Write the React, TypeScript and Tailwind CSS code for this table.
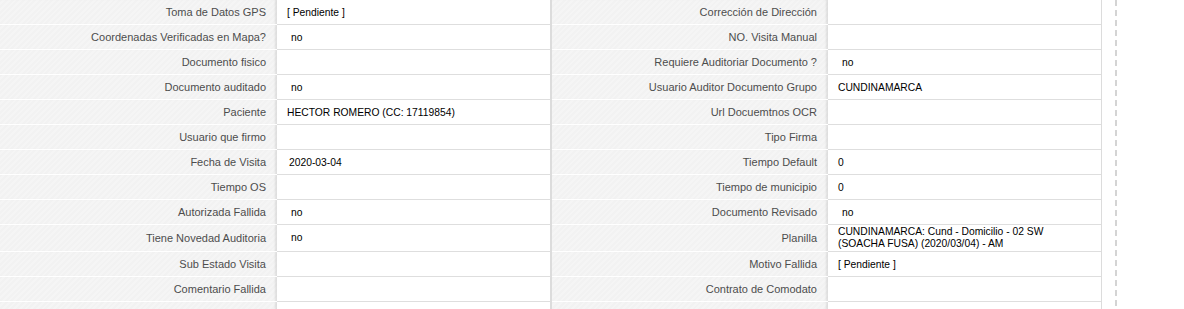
import React from "react";

type Row = {
  label: string;
  value?: React.ReactNode;
  pad?: string;
  tall?: boolean;
};

const left: Row[] = [
  { label: "Toma de Datos GPS", value: "[ Pendiente ]" },
  { label: "Coordenadas Verificadas en Mapa?", value: "no", pad: "pl-[14px]" },
  { label: "Documento fisico" },
  { label: "Documento auditado", value: "no", pad: "pl-[14px]" },
  { label: "Paciente", value: "HECTOR ROMERO (CC: 17119854)" },
  { label: "Usuario que firmo" },
  { label: "Fecha de Visita", value: "2020-03-04", pad: "pl-[12px]" },
  { label: "Tiempo OS" },
  { label: "Autorizada Fallida", value: "no", pad: "pl-[14px]" },
  { label: "Tiene Novedad Auditoria", value: "no", pad: "pl-[14px]", tall: true },
  { label: "Sub Estado Visita" },
  { label: "Comentario Fallida" },
  { label: "" },
];

const right: Row[] = [
  { label: "Corrección de Dirección" },
  { label: "NO. Visita Manual" },
  { label: "Requiere Auditoriar Documento ?", value: "no", pad: "pl-[14px]" },
  { label: "Usuario Auditor Documento Grupo", value: "CUNDINAMARCA" },
  { label: "Url Docuemtnos OCR" },
  { label: "Tipo Firma" },
  { label: "Tiempo Default", value: "0" },
  { label: "Tiempo de municipio", value: "0" },
  { label: "Documento Revisado", value: "no", pad: "pl-[14px]" },
  {
    label: "Planilla",
    value: (
      <>
        CUNDINAMARCA: Cund - Domicilio - 02 SW
        <br />
        (SOACHA FUSA) (2020/03/04) - AM
      </>
    ),
    tall: true,
  },
  { label: "Motivo Fallida", value: "[ Pendiente ]" },
  { label: "Contrato de Comodato" },
  { label: "" },
];

function FieldRow({ row, labelW }: { row: Row; labelW: string }) {
  return (
    <div className="flex">
      <div
        className={`${labelW} shrink-0 flex items-center justify-end pr-[11px] border-b border-white text-[11px] text-[#4d4d4d] bg-[repeating-linear-gradient(135deg,#f2f2f2_0px,#f2f2f2_2px,#f5f5f5_2px,#f5f5f5_4px)] shadow-[inset_-3px_0_2px_-1px_rgba(0,0,0,0.09)] ${
          row.tall ? "min-h-[27px]" : "h-[25px] pt-px"
        }`}
      >
        {row.label}
      </div>
      <div
        className={`flex-1 flex items-center border-b border-[#dedede] bg-white text-black text-[10.3px] leading-[12px] ${
          row.pad ?? "pl-[10px]"
        } ${row.tall ? "min-h-[27px] py-px" : "h-[25px] pt-px"}`}
      >
        {row.value}
      </div>
    </div>
  );
}

export default function App() {
  return (
    <div className="w-[1184px] h-[309px] overflow-hidden bg-white font-['Liberation_Sans',Arial,sans-serif]">
      <div className="flex items-stretch">
        <div className="w-[550px] flex flex-col">
          {left.map((r, i) => (
            <FieldRow key={i} row={r} labelW="w-[277px]" />
          ))}
        </div>
        <div className="w-[2px] bg-[#dcdcdc] shrink-0" />
        <div className="w-[550px] flex flex-col border-r border-[#dcdcdc]">
          {right.map((r, i) => (
            <FieldRow key={i} row={r} labelW="w-[276px]" />
          ))}
        </div>
        <div className="w-[13px] shrink-0" />
        <div className="w-[2px] shrink-0 bg-[repeating-linear-gradient(to_bottom,#d4d4d4_0px,#d4d4d4_6px,transparent_6px,transparent_10px)]" />
      </div>
    </div>
  );
}
